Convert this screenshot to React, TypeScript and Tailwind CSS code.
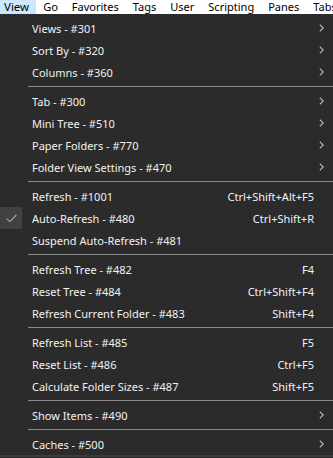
import React from 'react';

type Item =
  | { sep: true }
  | { sep?: false; label: string; shortcut?: string; sub?: boolean; checked?: boolean };

const items: Item[] = [
  { label: 'Views - #301', sub: true },
  { label: 'Sort By - #320', sub: true },
  { label: 'Columns - #360', sub: true },
  { sep: true },
  { label: 'Tab - #300', sub: true },
  { label: 'Mini Tree - #510', sub: true },
  { label: 'Paper Folders - #770', sub: true },
  { label: 'Folder View Settings - #470', sub: true },
  { sep: true },
  { label: 'Refresh - #1001', shortcut: 'Ctrl+Shift+Alt+F5' },
  { label: 'Auto-Refresh - #480', shortcut: 'Ctrl+Shift+R', checked: true },
  { label: 'Suspend Auto-Refresh - #481' },
  { sep: true },
  { label: 'Refresh Tree - #482', shortcut: 'F4' },
  { label: 'Reset Tree - #484', shortcut: 'Ctrl+Shift+F4' },
  { label: 'Refresh Current Folder - #483', shortcut: 'Shift+F4' },
  { sep: true },
  { label: 'Refresh List - #485', shortcut: 'F5' },
  { label: 'Reset List - #486', shortcut: 'Ctrl+F5' },
  { label: 'Calculate Folder Sizes - #487', shortcut: 'Shift+F5' },
  { sep: true },
  { label: 'Show Items - #490', sub: true },
  { sep: true },
  { label: 'Caches - #500', sub: true },
];

const menus = ['View', 'Go', 'Favorites', 'Tags', 'User', 'Scripting', 'Panes', 'Tabs'];

const Chevron = () => (
  <svg width="5" height="8" viewBox="0 0 5 8" fill="none" className="block">
    <path d="M0.8 0.6 L4.2 4 L0.8 7.4" stroke="#bdbdbd" strokeWidth="1.1" />
  </svg>
);

const Check = () => (
  <svg width="11" height="9" viewBox="0 0 11 9" fill="none" className="block">
    <path d="M0.7 4.6 L3.8 7.6 L10.3 1" stroke="#a8a8a8" strokeWidth="1.1" />
  </svg>
);

export default function App() {
  return (
    <div
      className="w-[333px] h-[458px] overflow-hidden bg-[#2b2b2b] text-[11px] leading-none"
      style={{ fontFamily: '"Noto Sans", "Segoe UI", sans-serif' }}
    >
      {/* menu bar, top cut off in the capture */}
      <div className="h-[14px] bg-white flex overflow-hidden whitespace-nowrap text-[11.5px]">
        {menus.map((m, i) => (
          <div
            key={m}
            className={`h-full flex items-end pb-[2px] text-black ${
              i === 0 ? 'bg-[#cce8ff] pl-[4px] pr-[7px]' : 'px-[7px]'
            }`}
          >
            <span className={i === 0 ? '' : 'text-[11px]'}>{m}</span>
          </div>
        ))}
      </div>

      {/* dropdown */}
      <div className="pt-[3px] border-b-2 border-[#3d3d3d]">
        {items.map((it, i) =>
          it.sep ? (
            <div key={i} className="h-[7px] flex items-center pl-[28px]">
              <div className="h-px w-full bg-[#8a8a8a]" />
            </div>
          ) : (
            <div key={i} className="h-[22px] flex items-center text-[#f2f2f2]">
              <div className="w-[32px] h-full shrink-0">
                {it.checked && (
                  <div className="w-[22px] h-[22px] bg-[#414141] flex items-center justify-center">
                    <Check />
                  </div>
                )}
              </div>
              <span className="flex-1 whitespace-nowrap">{it.label}</span>
              {it.shortcut && <span className="whitespace-nowrap pr-[19px]">{it.shortcut}</span>}
              {it.sub && (
                <span className="pr-[9px]">
                  <Chevron />
                </span>
              )}
            </div>
          )
        )}
      </div>
    </div>
  );
}
